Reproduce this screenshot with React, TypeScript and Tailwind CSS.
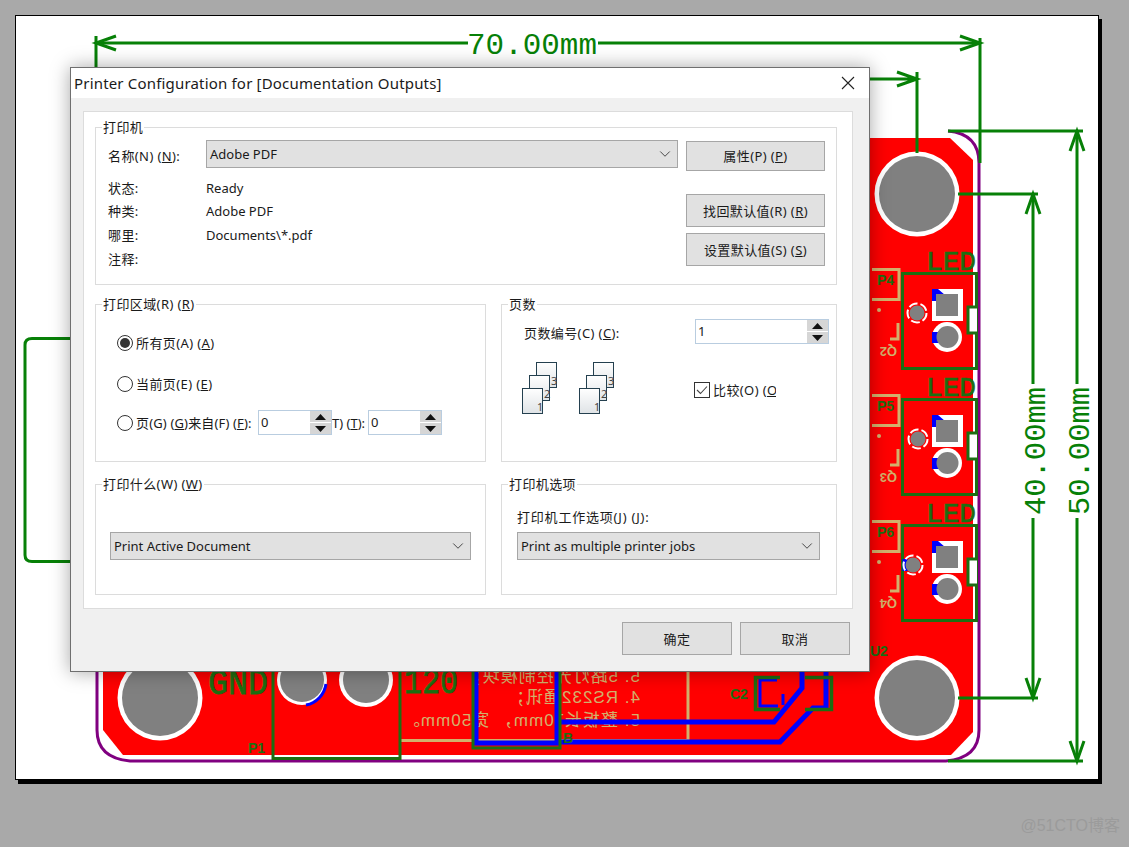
import { ReactNode } from "react";
import { ChevronDown } from "lucide-react";

const green = "#078007";
const darkGreen = "#1c6e12";
const tan = "#d2b06c";

function Group({ legend, className, children }: { legend: ReactNode; className: string; children: ReactNode }) {
  return (
    <div className={`relative border border-[#dcdcdc] ${className}`}>
      <span className="absolute -top-[11px] left-[6px] bg-white px-[1px] leading-[20px] tracking-[0.4px]">{legend}</span>
      {children}
    </div>
  );
}

function Select({ value, className }: { value: string; className: string }) {
  return (
    <div className={`flex h-[28px] items-center justify-between border border-[#a6a6a6] bg-[#e1e1e1] pl-[3px] pr-[3px] ${className}`}>
      <span>{value}</span>
      <ChevronDown size={18} strokeWidth={1.3} className="text-[#444]" />
    </div>
  );
}

function PushButton({ children, className }: { children: ReactNode; className: string }) {
  return (
    <div className={`flex items-center justify-center border border-[#a6a6a6] bg-[#e1e1e1] tracking-[0.4px] ${className}`}>
      {children}
    </div>
  );
}

function Spin({ value, className }: { value: string; className: string }) {
  return (
    <div className={`flex h-[25px] shrink-0 border border-[#b9cde0] bg-white ${className}`}>
      <span className="flex-1 pl-[2px] leading-[22px]">{value}</span>
      <div className="flex w-[21px] flex-col gap-[1px] bg-white">
        <div className="flex flex-1 items-center justify-center bg-[#d6d6d6]">
          <svg width="11" height="6" viewBox="0 0 11 6"><path d="M5.5 0 11 6H0Z" fill="#111" /></svg>
        </div>
        <div className="flex flex-1 items-center justify-center bg-[#d6d6d6]">
          <svg width="11" height="6" viewBox="0 0 11 6"><path d="M0 0H11L5.5 6Z" fill="#111" /></svg>
        </div>
      </div>
    </div>
  );
}

function Radio({ checked }: { checked?: boolean }) {
  return (
    <span className="flex h-[16px] w-[16px] shrink-0 items-center justify-center rounded-full border border-[#333] bg-white">
      {checked && <span className="h-[10px] w-[10px] rounded-full bg-[#333]" />}
    </span>
  );
}

function PageStack() {
  const pages = [
    { x: 14, y: 0, n: "3" },
    { x: 7, y: 13, n: "2" },
    { x: 0, y: 26, n: "1" },
  ];
  return (
    <svg width="36" height="53" viewBox="0 0 36 53" className="shrink-0">
      <defs>
        <linearGradient id="sheet" x1="0" y1="0" x2="0" y2="1">
          <stop offset="0" stopColor="#ffffff" />
          <stop offset="1" stopColor="#dfe3e6" />
        </linearGradient>
      </defs>
      {pages.map((p) => (
        <g key={p.n}>
          <rect x={p.x + 0.5} y={p.y + 0.5} width="20" height="25" fill="url(#sheet)" stroke="#24404f" />
          <text x={p.x + 15} y={p.y + 23} fontSize="11" fill="#444" fontFamily="Noto Sans, sans-serif">{p.n}</text>
        </g>
      ))}
    </svg>
  );
}

function LedBlock({ dy, holeX, holeBlue }: { dy: number; holeX: number; holeBlue?: boolean }) {
  const label = ["P4", "P5", "P6"][Math.round(dy / 126)];
  const q = ["Q2", "Q3", "Q4"][Math.round(dy / 126)];
  return (
    <g transform={`translate(0 ${dy})`}>
      <text x="926" y="270" fontSize="27" fill={darkGreen} stroke={darkGreen} strokeWidth="0.7" fontFamily="Liberation Mono, monospace" textLength="50" lengthAdjust="spacingAndGlyphs">LED</text>
      <path d="M872 269.5H899V299.5H872" fill="none" stroke={tan} strokeWidth="3" />
      <text x="877" y="285" fontSize="14" fontWeight="700" fill={darkGreen} fontFamily="Liberation Sans, sans-serif">{label}</text>
      <circle cx="879" cy="310" r="2" fill={tan} />
      <path d="M898 323V339H890" fill="none" stroke={tan} strokeWidth="3" />
      <text transform="translate(897 347) rotate(180)" fontSize="13" fontWeight="700" fill={tan} fontFamily="Liberation Sans, sans-serif">{q}</text>
      <rect x="902.5" y="273.5" width="74" height="95" fill="none" stroke={darkGreen} strokeWidth="3" />
      <path d="M977 307H968V333H977" fill="#fff" stroke={darkGreen} strokeWidth="3" />
      {holeBlue && <path d="M905 559V571" stroke="#0000ff" strokeWidth="5" transform={`translate(0 ${-dy})`} />}
      <circle cx={holeX} cy="313" r="9.5" fill="none" stroke="#fff" strokeWidth="2" strokeDasharray="9 3" />
      <circle cx={holeX} cy="313" r="7.5" fill="#808080" />
      <rect x="932" y="289" width="31" height="32" fill="#fff" />
      <path d="M932 289H938L945 295H936V301H932Z" fill="#0000ff" />
      <rect x="936" y="294" width="22" height="22" fill="#808080" />
      <circle cx="947" cy="337" r="15" fill="#fff" />
      <rect x="932" y="332" width="8" height="11" fill="#0000ff" />
      <circle cx="947.5" cy="337" r="11" fill="#808080" />
    </g>
  );
}

function Hole({ cx, cy }: { cx: number; cy: number }) {
  return (
    <>
      <circle cx={cx} cy={cy} r="42.5" fill="#fff" />
      <circle cx={cx} cy={cy} r="38" fill="#808080" />
    </>
  );
}

function VArrow({ x, y, dir }: { x: number; y: number; dir: 1 | -1 }) {
  return <path d={`M${x - 7} ${y + dir * 20}L${x} ${y}L${x + 7} ${y + dir * 20}`} fill="none" stroke={green} strokeWidth="3" />;
}

function Board() {
  return (
    <svg width="1129" height="847" viewBox="0 0 1129 847" className="absolute left-0 top-0">
      <path d="M103 138H950L973 160V732L951 755H123L103 730Z" fill="#ff0000" />
      <path d="M948 131Q979 134 979 163V730Q979 758 946 761H130Q97 758 97 730V665" fill="none" stroke="#800080" strokeWidth="3" />

      <Hole cx={917} cy={194} />
      <Hole cx={917} cy={698} />
      <Hole cx={160} cy={698} />
      <circle cx="302" cy="680" r="25" fill="#fff" />
      <path d="M326 684A25 25 0 0 1 306 705" fill="none" stroke="#0000ff" strokeWidth="3" />
      <circle cx="302" cy="680" r="22" fill="#808080" />
      <circle cx="366" cy="680" r="27" fill="#fff" />
      <circle cx="366" cy="680" r="23" fill="#808080" />

      <LedBlock dy={0} holeX={917} />
      <LedBlock dy={126} holeX={918} />
      <LedBlock dy={252} holeX={913} holeBlue />

      <path d="M400 740.5H688V660" fill="none" stroke={tan} strokeWidth="3" />
      <g fill={tan} fontSize="17" letterSpacing="1" fontFamily="Liberation Sans, 'Noto Sans CJK SC', sans-serif">
        <text transform="translate(640 682) scale(-1 1)">5.  5路灯光控制模块；</text>
        <text transform="translate(640 703) scale(-1 1)">4.  RS232通讯；</text>
        <text transform="translate(640 726) scale(-1 1)">5.  整板长70mm， 宽50mm。</text>
      </g>

      <path d="M476 660V743H557V660" fill="none" stroke="#0000ff" strokeWidth="5" />
      <path d="M556 722H774L802 688V671" fill="none" stroke="#0000ff" strokeWidth="5" />
      <path d="M557 742H780L813 708H826V672" fill="none" stroke="#0000ff" strokeWidth="5" />
      <path d="M777 680H760V706H778M783 705V694" fill="none" stroke="#0000ff" strokeWidth="3" />
      <path d="M473 660V748H560V660" fill="none" stroke={darkGreen} strokeWidth="3" />
      <path d="M780 677.5H755.5V709.5H780M805 677.5H831.5V709.5H805" fill="none" stroke={darkGreen} strokeWidth="3.5" />
      <path d="M700 670.5H866" stroke={darkGreen} strokeWidth="3" />
      <path d="M273 660V758.5H400V660" fill="none" stroke={darkGreen} strokeWidth="3" />

      <g fill={darkGreen} stroke={darkGreen} strokeWidth="0.8" fontSize="36" fontFamily="Liberation Mono, monospace">
        <text x="208" y="694" textLength="60" lengthAdjust="spacingAndGlyphs">GND</text>
        <text x="404" y="693" textLength="54" lengthAdjust="spacingAndGlyphs">120</text>
      </g>
      <g fill={darkGreen} fontWeight="700" fontFamily="Liberation Sans, sans-serif">
        <text x="248" y="753" fontSize="14">P1</text>
        <text x="730" y="699" fontSize="14">C2</text>
        <text x="563" y="743" fontSize="14">B</text>
        <text x="870" y="656" fontSize="14">U2</text>
      </g>

      <g fill="none" stroke={green} strokeWidth="3">
        <path d="M96 36V70M980 38V163M96 43H468M598 43H980" />
        <path d="M116 36L96 43L116 50M960 36L980 43L960 50" />
        <path d="M70 338.5H32Q25 338.5 25 345V555Q25 561.5 32 561.5H70" />
        <path d="M860 79H917M917 72V153M897 72L917 79L897 86" />
        <path d="M948 131H1083M948 761H1083M1077 131V384M1077 518V761" />
        <path d="M958 194H1038M958 698H1038M1033 194V384M1033 518V698" />
      </g>
      <VArrow x={1077} y={131} dir={1} />
      <VArrow x={1077} y={761} dir={-1} />
      <VArrow x={1033} y={194} dir={1} />
      <VArrow x={1033} y={698} dir={-1} />
      <g fill={green} fontSize="30" fontFamily="Liberation Mono, monospace">
        <text x="467" y="54" textLength="130" lengthAdjust="spacingAndGlyphs">70.00mm</text>
        <text transform="translate(1045 515) rotate(-90)" textLength="128" lengthAdjust="spacingAndGlyphs">40.00mm</text>
        <text transform="translate(1089 515) rotate(-90)" textLength="128" lengthAdjust="spacingAndGlyphs">50.00mm</text>
      </g>
    </svg>
  );
}

function Dialog() {
  return (
    <div
      className="absolute left-[70px] top-[67px] flex h-[605px] w-[800px] flex-col border border-[#6f6f6f] bg-[#f0f0f0] text-[13px] leading-[20px] text-[#1a1a1a] shadow-[0_0_18px_rgba(0,0,0,0.35)]"
      style={{ fontFamily: "'Noto Sans', 'Noto Sans CJK SC', sans-serif" }}
    >
      <div className="flex h-[30px] shrink-0 items-center justify-between bg-white pl-[3px] pr-[14px]">
        <span className="text-[15px] tracking-[0.18px]">Printer Configuration for [Documentation Outputs]</span>
        <svg width="14" height="14" viewBox="0 0 14 14"><path d="M1 1 13 13M13 1 1 13" stroke="#222" strokeWidth="1.1" /></svg>
      </div>

      <div className="ml-[12px] mr-[16px] mt-[13px] flex h-[498px] flex-col gap-[19px] border border-[#dcdcdc] bg-white pl-[11px] pr-[15px] pt-[15px]">
        <Group legend="打印机" className="flex h-[158px] shrink-0 pl-[12px] pr-[11px] pt-[12px]">
          <div className="w-[571px] shrink-0">
            <div className="flex items-center">
              <span className="mt-[4px] w-[98px] whitespace-nowrap tracking-[0.4px]">名称(N) (<u>N</u>):</span>
              <Select value="Adobe PDF" className="w-[472px]" />
            </div>
            <div className="mt-[8px] grid auto-rows-[23.5px] grid-cols-[98px_1fr] items-center">
              <span className="tracking-[0.4px]">状态:</span><span>Ready</span>
              <span className="tracking-[0.4px]">种类:</span><span>Adobe PDF</span>
              <span className="tracking-[0.4px]">哪里:</span><span>Documents\*.pdf</span>
              <span className="mt-[2px] tracking-[0.4px]">注释:</span><span />
            </div>
          </div>
          <div className="ml-[7px] flex flex-1 flex-col pt-[1px]">
            <PushButton className="h-[30px]"><span>属性(P) (<u>P</u>)</span></PushButton>
            <PushButton className="mt-[23px] h-[33px]"><span>找回默认值(R) (<u>R</u>)</span></PushButton>
            <PushButton className="mt-[6px] h-[33px]"><span>设置默认值(S) (<u>S</u>)</span></PushButton>
          </div>
        </Group>

        <div className="grid h-[158px] shrink-0 grid-cols-[391px_336px] gap-x-[15px]">
          <Group legend={<>打印区域(R) (<u>R</u>)</>} className="flex flex-col pl-[21px] pt-[28px]">
            <label className="flex items-center gap-[3px] tracking-[0.4px]"><Radio checked /><span>所有页(A) (<u>A</u>)</span></label>
            <label className="mt-[21px] flex items-center gap-[3px] tracking-[0.4px]"><Radio /><span>当前页(E) (<u>E</u>)</span></label>
            <div className="mt-[16px] flex h-[25px] items-center">
              <Radio />
              <span className="ml-[3px] w-[122px] overflow-hidden whitespace-nowrap tracking-[0.15px]">页(G) (<u>G</u>)来自(F) (<u>F</u>):</span>
              <Spin value="0" className="w-[74px]" />
              <span className="w-[36px] overflow-hidden whitespace-nowrap">T) (<u>T</u>):</span>
              <Spin value="0" className="w-[74px]" />
            </div>
          </Group>
          <Group legend="页数" className="flex pl-[22px] pt-[14px]">
            <div className="w-[171px] shrink-0">
              <div className="mt-[4px] tracking-[0.4px]">页数编号(C) (<u>C</u>):</div>
              <div className="-ml-[2px] mt-[19px] flex gap-[21px]">
                <PageStack />
                <PageStack />
              </div>
            </div>
            <div className="flex flex-col">
              <Spin value="1" className="w-[134px]" />
              <div className="-ml-[1px] mt-[36px] flex items-center gap-[3px]">
                <span className="flex h-[16px] w-[16px] items-center justify-center border border-[#333] bg-white">
                  <svg width="12" height="10" viewBox="0 0 12 10"><path d="M1 5 4.5 8.5 11 1.5" fill="none" stroke="#444" strokeWidth="1.1" /></svg>
                </span>
                <span className="w-[63px] overflow-hidden whitespace-nowrap tracking-[0.4px]">比较(O) (<u>O</u>)</span>
              </div>
            </div>
          </Group>
        </div>

        <div className="mt-[3px] grid h-[111px] shrink-0 grid-cols-[391px_336px] gap-x-[15px]">
          <Group legend={<>打印什么(W) (<u>W</u>)</>} className="pl-[14px] pr-[14px] pt-[47px]">
            <Select value="Print Active Document" className="w-full" />
          </Group>
          <Group legend="打印机选项" className="pl-[15px] pr-[16px] pt-[22px]">
            <div className="mb-[5px] tracking-[0.8px]">打印机工作选项(J) (<u>J</u>):</div>
            <Select value="Print as multiple printer jobs" className="w-full" />
          </Group>
        </div>
      </div>

      <div className="flex justify-end gap-[8px] pr-[19px] pt-[13px]">
        <PushButton className="h-[33px] w-[110px]">确定</PushButton>
        <PushButton className="h-[33px] w-[110px]">取消</PushButton>
      </div>
    </div>
  );
}

export default function App() {
  return (
    <div className="relative h-[847px] w-[1129px] overflow-hidden bg-[#a9a9a9] pl-[15px] pt-[15px]">
      <div className="h-[765px] w-[1084px] border border-black bg-white shadow-[3px_4px_0_#000]" />
      <Board />
      <Dialog />
      <div
        className="absolute bottom-[9px] right-[9px] text-[16px] text-[#9b9b9b]"
        style={{ fontFamily: "'Liberation Sans', 'Noto Sans CJK SC', sans-serif" }}
      >
        @51CTO博客
      </div>
    </div>
  );
}
